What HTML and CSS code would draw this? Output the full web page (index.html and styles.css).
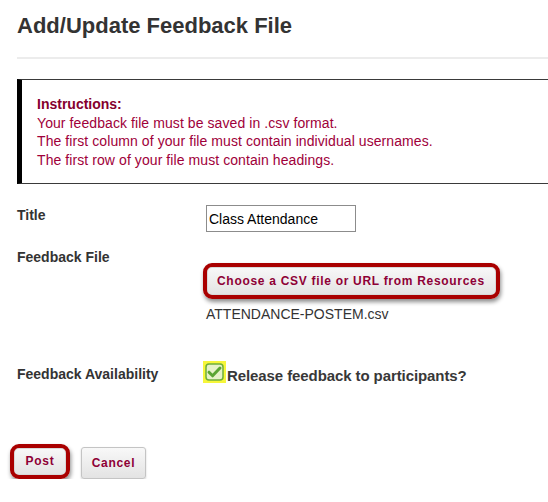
FILE: index.html
```html
<!DOCTYPE html>
<html>
<head>
<meta charset="utf-8">
<link rel="stylesheet" href="styles.css">
</head>
<body>
<div class="page">
  <h1 class="page-title">Add/Update Feedback File</h1>
  <div class="rule"></div>
  <div class="instructions">
    <div class="instr-head">Instructions:</div>
    <div>Your feedback file must be saved in .csv format.</div>
    <div>The first column of your file must contain individual usernames.</div>
    <div>The first row of your file must contain headings.</div>
  </div>

  <div class="row row-title">
    <div class="label">Title</div>
    <div class="value"><input class="text-input" type="text" value="Class Attendance"></div>
  </div>

  <div class="row row-file">
    <div class="label">Feedback File</div>
    <div class="value">
      <button class="btn btn-highlight btn-choose">Choose a CSV file or URL from Resources</button>
      <div class="filename">ATTENDANCE-POSTEM.csv</div>
    </div>
  </div>

  <div class="row row-avail">
    <div class="label label-avail">Feedback Availability</div>
    <div class="value value-check">
      <span class="check-hl">
        <svg width="23" height="22" viewBox="0 0 23 22">
          <rect x="0" y="0" width="23" height="22" fill="#f6f63a"/>
          <rect x="3" y="3" width="17" height="16" rx="3" ry="3" fill="#e6f2c8" stroke="#6fae3c" stroke-width="1.5"/>
          <path d="M6 11.2 L9.6 14.8 L17 7" fill="none" stroke="#5aa532" stroke-width="3" stroke-linecap="round" stroke-linejoin="round"/>
        </svg>
      </span>
      <span class="check-text">Release feedback to participants?</span>
    </div>
  </div>

  <div class="actions">
    <button class="btn btn-highlight btn-post">Post</button>
    <button class="btn btn-cancel">Cancel</button>
  </div>
</div>
</body>
</html>
```

FILE: styles.css
```css
html, body {
  margin: 0;
  padding: 0;
  background: #ffffff;
}

body {
  font-family: "Liberation Sans", Arial, sans-serif;
  color: #333333;
  overflow: hidden;
}

.page {
  padding: 13px 0 0 17px;
}

.page-title {
  margin: 0;
  font-size: 22px;
  line-height: 26px;
  font-weight: bold;
  color: #333333;
}

.rule {
  margin-top: 18px;
  height: 2px;
  background: #ececec;
}

.instructions {
  margin-top: 20px;
  border-top: 1px solid #3a3a3a;
  border-bottom: 1px solid #3a3a3a;
  border-left: 5px solid #000000;
  padding: 15px 0 14px 15px;
  font-size: 14px;
  line-height: 18.5px;
  letter-spacing: 0.08px;
  color: #a0003a;
}

.instr-head {
  font-weight: bold;
  color: #85002e;
  letter-spacing: 0;
}

.row {
  display: flex;
  align-items: flex-start;
}

.label {
  width: 189px;
  flex: none;
  font-size: 14px;
  line-height: 18px;
  font-weight: bold;
  color: #333333;
}

.value {
  display: flex;
  flex-direction: column;
  align-items: flex-start;
}

.row-title {
  margin-top: 21px;
}

.row-title .label {
  padding-top: 1px;
}

.text-input {
  box-sizing: border-box;
  width: 150px;
  height: 27px;
  margin: 0;
  border: 1px solid #8c8c8c;
  padding: 0 2px;
  font-family: "Liberation Sans", Arial, sans-serif;
  font-size: 14px;
  color: #000000;
  background: #ffffff;
}

.row-file {
  margin-top: 16px;
}

.btn {
  font-family: "Liberation Sans", Arial, sans-serif;
  font-weight: bold;
  font-size: 12px;
  letter-spacing: 0.7px;
  color: #8e0036;
  margin: 0;
  cursor: pointer;
  background: linear-gradient(#f8f8f8, #e3e3e3);
}

.btn-highlight {
  border: 4px solid #a90000;
  border-radius: 9px;
  box-shadow: 1px 3px 4px rgba(0, 0, 0, 0.45), inset 0 0 0 1px #d8d8d8;
}

.btn-choose {
  margin-top: 15px;
  margin-left: -3px;
  height: 36px;
  padding: 0 11px 0 10px;
  line-height: 26px;
}

.filename {
  margin-top: 6px;
  font-size: 14px;
  line-height: 18px;
  color: #333333;
}

.row-avail {
  margin-top: 38px;
}

.label-avail {
  padding-top: 4px;
}

.value-check {
  flex-direction: row;
  margin-left: -3px;
}

.check-hl {
  display: block;
  width: 23px;
  height: 22px;
}

.check-hl svg {
  display: block;
}

.check-text {
  margin-top: 6px;
  margin-left: 1px;
  font-size: 15px;
  line-height: 18px;
  font-weight: bold;
  letter-spacing: -0.09px;
  color: #383838;
}

.actions {
  display: flex;
  align-items: flex-end;
  gap: 11px;
  margin-top: 59px;
  margin-left: -7px;
}

.btn-post {
  height: 35px;
  width: 60px;
  padding: 0;
  line-height: 27px;
}

.btn-cancel {
  height: 32px;
  width: 65px;
  padding: 0;
  border: 1px solid #c4c4c4;
  border-radius: 3px;
  box-shadow: 0 1px 2px rgba(0, 0, 0, 0.2);
  line-height: 30px;
}
```
